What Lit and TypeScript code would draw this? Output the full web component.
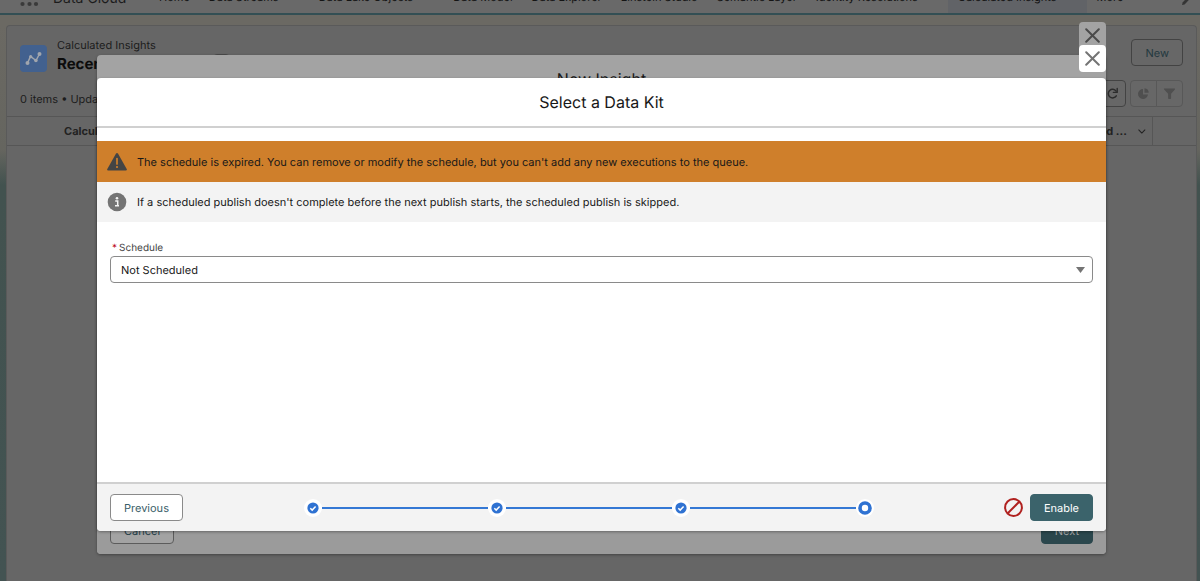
import { LitElement, html, css, svg, nothing } from "lit";
import { customElement, state } from "lit/decorators.js";
import { classMap } from "lit/directives/class-map.js";

interface NavItem {
  label: string;
  menu?: boolean;
  active?: boolean;
}

const NAV: NavItem[] = [
  { label: "Home" },
  { label: "Data Streams", menu: true },
  { label: "Data Lake Objects", menu: true },
  { label: "Data Model" },
  { label: "Data Explorer" },
  { label: "Einstein Studio" },
  { label: "Semantic Layer" },
  { label: "Identity Resolutions", menu: true },
  { label: "Calculated Insights", menu: true, active: true },
  { label: "More", menu: true },
];

const STEPS = ["Source", "Objects", "Details", "Schedule"];

const chevron = html`<svg class="chevron" viewBox="0 0 10 6" aria-hidden="true">
  <path d="M1 1l4 4 4-4" fill="none" stroke="currentColor" stroke-width="1.4" stroke-linecap="round" stroke-linejoin="round" />
</svg>`;

const cross = html`<svg class="cross" viewBox="0 0 15 15" aria-hidden="true">
  <path d="M1.2 1.2l12.6 12.6M13.8 1.2L1.2 13.8" fill="none" stroke="currentColor" stroke-width="2" stroke-linecap="round" />
</svg>`;

@customElement("app-root")
export class AppRoot extends LitElement {
  @state() private schedule = "none";

  static styles = css`
    :host {
      display: block;
      font-family: Inter, "Liberation Sans", sans-serif;
      font-size: 11px;
      line-height: 16px;
      color: #181818;
      text-rendering: geometricPrecision;
    }
    * {
      box-sizing: border-box;
    }
    button,
    select {
      font: inherit;
      margin: 0;
      text-rendering: inherit;
    }
    button {
      display: inline-flex;
      align-items: center;
      justify-content: center;
      height: 27px;
      border: 1px solid #8a8a8a;
      border-radius: 4px;
      background: #fff;
      color: #3a6069;
      padding: 0 13px;
    }
    .stage {
      position: relative;
      height: 100vh;
      overflow: hidden;
      display: flex;
      flex-direction: column;
      background: linear-gradient(#6b6963 25px, #65655f 150px, #42524f 185px, #435352);
    }

    /* Page under the dialogs */
    .nav {
      display: flex;
      align-items: flex-end;
      height: 15px;
      flex: none;
      padding: 0 10px 0 20px;
      background: #696969;
      border-bottom: 2px solid #334f54;
    }
    .launcher {
      width: 19px;
      height: 9px;
      flex: none;
      fill: #3a3a3a;
      margin-bottom: 6px;
    }
    .app-name {
      font-size: 14px;
      line-height: 16px;
      width: 96px;
      margin-left: 14px;
      margin-bottom: 6px;
      white-space: nowrap;
      color: #1c1c1c;
    }
    .nav-item {
      display: flex;
      align-items: center;
      gap: 14px;
      height: 26px;
      padding: 0 9px 7px 10px;
      color: #141414;
      text-decoration: none;
      white-space: nowrap;
    }
    .nav-item.active {
      background: #616367;
    }
    .nav-item .chevron {
      width: 7px;
      height: 5px;
    }
    .pencil {
      width: 9px;
      height: 10px;
      margin-left: auto;
      margin-bottom: 7px;
    }
    .card {
      flex: 1;
      display: flex;
      flex-direction: column;
      margin: 10px 3px 0 6px;
      background: #666;
      border: 1px solid #5a5a5a;
      border-bottom: 0;
      border-radius: 4px 4px 0 0;
    }
    .card-head {
      display: flex;
      gap: 10px;
      padding: 11px 13px 0;
    }
    .tile {
      width: 27px;
      height: 27px;
      margin-top: 8px;
      border-radius: 4px;
      background: #42618f;
    }
    .titles {
      flex: 1;
      color: #1c1c1c;
    }
    .kicker {
      margin: 0;
    }
    .title-row {
      display: flex;
      align-items: center;
      gap: 16px;
      height: 22px;
    }
    .title-row h1 {
      margin: 0;
      font-size: 15px;
      line-height: 20px;
      width: 140px;
      white-space: nowrap;
      color: #0c0c0c;
    }
    .pin {
      width: 17px;
      height: 20px;
      padding: 0;
      background: #666;
      border-color: #4a4a4a;
    }
    .dim {
      background: #676767;
      border-color: #434343;
      color: #24393f;
    }
    .card-head .dim {
      margin-top: 2px;
    }
    .toolbar {
      display: flex;
      align-items: flex-end;
      justify-content: space-between;
      padding: 5px 13px 9px;
      color: #1c1c1c;
    }
    .tools {
      display: flex;
      gap: 4px;
    }
    .tools button {
      width: 27px;
      padding: 0;
    }
    .tools svg {
      width: 13px;
      height: 13px;
    }
    .pair {
      display: flex;
    }
    .pair button {
      color: #4f4f4f;
      border-color: #585858;
    }
    .pair button:first-child {
      border-radius: 4px 0 0 4px;
    }
    .pair button:last-child {
      border-radius: 0 4px 4px 0;
      margin-left: -1px;
    }
    table {
      width: 100%;
      border-collapse: collapse;
      table-layout: fixed;
    }
    th {
      height: 29px;
      padding: 0;
      border-top: 1px solid #565656;
      border-bottom: 1px solid #565656;
      text-align: left;
      color: #222;
      white-space: nowrap;
    }
    .col-index {
      width: 57px;
    }
    .col-end {
      width: 44px;
      border-left: 1px solid #565656;
    }
    .col-date {
      width: 112px;
    }
    .th-inner {
      display: flex;
      align-items: center;
      justify-content: flex-end;
      gap: 11px;
      padding-right: 6px;
    }
    .th-inner .chevron {
      width: 11px;
      height: 7px;
    }

    /* Dialogs */
    .layer {
      position: absolute;
      inset: 0;
      display: flex;
      flex-direction: column;
      align-items: stretch;
      gap: 6px;
      padding: 22px 94px 27px 97px;
    }
    .layer.front {
      padding-top: 45px;
      padding-bottom: 50px;
    }
    .close {
      align-self: flex-end;
      flex: none;
      width: 27px;
      padding: 0;
      border: 0;
      color: #747474;
    }
    .cross {
      width: 15px;
      height: 15px;
    }
    .dialog {
      flex: 1;
      display: flex;
      flex-direction: column;
      overflow: hidden;
      background: #fff;
      border-radius: 4px;
      box-shadow: 0 1px 3px rgba(0, 0, 0, 0.35);
    }
    .back .dialog {
      background: #a3a3a3;
    }
    .back .close {
      background: #a3a3a3;
      color: #4a4a4a;
    }
    .dialog-head {
      padding: 12px 16px;
      border-bottom: 2px solid #d0d0d0;
      text-align: center;
    }
    .dialog-head h2 {
      margin: 0;
      font-size: 16px;
      line-height: 24px;
      font-weight: 400;
    }
    .dialog-body {
      flex: 1;
      padding-top: 13px;
    }
    .banner {
      display: flex;
      align-items: center;
      gap: 10px;
      padding: 0 10px;
      min-height: 40px;
      background: #f3f3f3;
    }
    .banner.warning {
      background: #cf7f2b;
      min-height: 41px;
    }
    .banner svg {
      width: 20px;
      height: 20px;
      flex: none;
    }
    .field {
      display: flex;
      flex-direction: column;
      padding: 18px 13px 0;
    }
    .field label {
      padding-left: 2px;
      font-size: 10px;
      color: #444;
    }
    .required {
      color: #ba0517;
      margin-right: 2px;
    }
    .select-wrap {
      display: grid;
      align-items: center;
    }
    .select-wrap > * {
      grid-area: 1 / 1;
    }
    select {
      appearance: none;
      width: 100%;
      height: 27px;
      padding: 0 30px 0 10px;
      border: 1px solid #8a8a8a;
      border-radius: 4px;
      background: #fff;
      color: #181818;
    }
    .arrow {
      justify-self: end;
      width: 9px;
      height: 6px;
      margin-right: 8px;
      fill: #747474;
      pointer-events: none;
    }
    .dialog-foot {
      display: flex;
      align-items: center;
      justify-content: space-between;
      height: 49px;
      padding: 0 13px;
      border-top: 2px solid #d0d0d0;
      background: #f3f3f3;
    }
    .back .dialog-foot {
      background: #9b9b9b;
      border-color: #888;
    }
    .back button {
      border-color: #5c5c5c;
    }
    .back .dialog-foot button {
      background: #a3a3a3;
      color: #25414a;
    }
    .back .dialog-foot .brand {
      background: #2b474d;
      border-color: #2b474d;
      color: #a3a3a3;
    }
    .brand {
      background: #3b636b;
      border-color: #3b636b;
      color: #fff;
    }
    .actions {
      display: flex;
      align-items: center;
      gap: 7px;
    }
    .blocked {
      width: 19px;
      height: 19px;
    }
    .progress {
      flex: 1;
      display: flex;
      align-items: center;
      max-width: 570px;
      margin: 0 8px 0 0;
      padding: 0;
      list-style: none;
    }
    .step {
      display: flex;
      align-items: center;
    }
    .step:not(:first-child) {
      flex: 1;
    }
    .step:not(:first-child)::before {
      content: "";
      flex: 1;
      height: 2px;
      background: #3478d4;
    }
    .step svg {
      width: 18px;
      height: 18px;
      flex: none;
    }
  `;

  private onSchedule(e: Event) {
    this.schedule = (e.target as HTMLSelectElement).value;
  }

  private renderNav() {
    return html`<nav class="nav">
      <svg class="launcher" viewBox="0 0 19 9" aria-hidden="true">
        ${[2.5, 9.5, 16].map((x) => svg`<circle cx=${x} cy="6" r="2.1" />`)}
      </svg>
      <span class="app-name">Data Cloud</span>
      ${NAV.map(
        (n) => html`<a class=${classMap({ "nav-item": true, active: !!n.active })} href="#"
          >${n.label}${n.menu ? chevron : nothing}</a
        >`
      )}
      <svg class="pencil" viewBox="0 0 9 10" aria-hidden="true">
        <path d="M1 9l.6-2.6L6.8 1l2 2-5.200 5.400z" fill="#353535" />
      </svg>
    </nav>`;
  }

  private renderPage() {
    return html`<main class="card">
      <div class="card-head">
        <svg class="tile" viewBox="0 0 27 27" aria-hidden="true">
          <path d="M7.500 18l3-6.500 5.500 4L19.500 9" fill="none" stroke="#a0a5ad" stroke-width="1.5" />
          <g fill="#a0a5ad">
            <circle cx="7.500" cy="18" r="2" />
            <circle cx="10.700" cy="11.700" r="1.600" />
            <circle cx="15.900" cy="15.500" r="1.800" />
            <circle cx="19.500" cy="9" r="2" />
          </g>
        </svg>
        <div class="titles">
          <p class="kicker">Calculated Insights</p>
          <div class="title-row">
            <h1>Recently Viewed</h1>
            <button class="pin" aria-label="Pin this list view"></button>
          </div>
        </div>
        <button class="dim">New</button>
      </div>
      <div class="toolbar">
        <span>0 items • Updated a few seconds ago</span>
        <div class="tools">
          <button class="dim" aria-label="Refresh">
            <svg viewBox="0 0 13 13" aria-hidden="true">
              <path d="M10.300 8.800a4.300 4.300 0 1 1-.2-4.700" fill="none" stroke="#2c2c2c" stroke-width="1.500" stroke-linecap="round" />
              <path d="M11.200 1.500v3.900H7.400" fill="none" stroke="#2c2c2c" stroke-width="1.400" stroke-linecap="round" stroke-linejoin="round" />
            </svg>
          </button>
          <div class="pair">
            <button class="dim" aria-label="Charts">
              <svg viewBox="0 0 13 13" aria-hidden="true">
                <path d="M6 2a5 5 0 1 0 5 5.500H6z" fill="currentColor" />
                <path d="M7.500 1.200a4.700 4.700 0 0 1 4.200 4.600H7.500z" fill="currentColor" />
              </svg>
            </button>
            <button class="dim" aria-label="Filters">
              <svg viewBox="0 0 13 13" aria-hidden="true">
                <path d="M1.300 1.500h10.400q.6.300.2.900L8.100 6.800v4.600q-1.600 1.200-3 0V6.800L1.100 2.400q-.4-.6.2-.9z" fill="currentColor" />
              </svg>
            </button>
          </div>
        </div>
      </div>
      <table>
        <thead>
          <tr>
            <th class="col-index"></th>
            <th>Calculated Insight Name</th>
            <th class="col-date"><div class="th-inner">Last Modified ... ${chevron}</div></th>
            <th class="col-end"></th>
          </tr>
        </thead>
      </table>
    </main>`;
  }

  private renderStep(label: string, i: number) {
    const current = i === STEPS.length - 1;
    return html`<li class="step">
      <svg viewBox="0 0 18 18" role="img" aria-label=${label}>
        <circle cx="9" cy="9" r="9" fill="#fff" />
        ${current
          ? svg`<circle cx="9" cy="9" r="5" fill="#fff" stroke="#2f72d2" stroke-width="3.600" />`
          : svg`<circle cx="9" cy="9" r="5.600" fill="#2f72d2" />
              <path d="M6.300 9.200l1.900 1.900 3.400-3.700" fill="none" stroke="#fff" stroke-width="1.500" />`}
      </svg>
    </li>`;
  }

  render() {
    return html`<div class="stage">
      ${this.renderNav()} ${this.renderPage()}

      <div class="layer back">
        <button class="close" aria-label="Close New Insight">${cross}</button>
        <section class="dialog">
          <header class="dialog-head"><h2>New Insight</h2></header>
          <div class="dialog-body"></div>
          <footer class="dialog-foot">
            <button>Cancel</button>
            <button class="brand">Next</button>
          </footer>
        </section>
      </div>

      <div class="layer front">
        <button class="close" aria-label="Close">${cross}</button>
        <section class="dialog" role="dialog" aria-labelledby="title">
          <header class="dialog-head"><h2 id="title">Select a Data Kit</h2></header>
          <div class="dialog-body">
            <div class="banner warning" role="alert">
              <svg viewBox="0 0 20 20" aria-hidden="true">
                <path d="M8.900 1.800q1.100-1.600 2.200 0l8.600 15.200q.6 1.400-.9 1.600H1.200q-1.500-.2-.9-1.600z" fill="#444" />
                <path d="M10 6.500v5.500" stroke="#cf7f2b" stroke-width="1.700" stroke-linecap="round" />
                <circle cx="10" cy="15" r="1.100" fill="#cf7f2b" />
              </svg>
              <span>The schedule is expired. You can remove or modify the schedule, but you can't add any new executions to the queue.</span>
            </div>
            <div class="banner">
              <svg viewBox="0 0 20 20" aria-hidden="true">
                <circle cx="10" cy="10" r="9.300" fill="#747474" />
                <circle cx="10" cy="6.200" r="1.300" fill="#f3f3f3" />
                <path d="M8.200 9h2.500v4.500M8 13.700h4" fill="none" stroke="#f3f3f3" stroke-width="1.500" />
              </svg>
              <span>If a scheduled publish doesn't complete before the next publish starts, the scheduled publish is skipped.</span>
            </div>
            <div class="field">
              <label for="schedule"><span class="required">*</span>Schedule</label>
              <div class="select-wrap">
                <select id="schedule" required .value=${this.schedule} @change=${this.onSchedule}>
                  <option value="none">Not Scheduled</option>
                </select>
                <svg class="arrow" viewBox="0 0 9 6" aria-hidden="true"><path d="M0 0h9L4.500 6z" /></svg>
              </div>
            </div>
          </div>
          <footer class="dialog-foot">
            <button>Previous</button>
            <ol class="progress">
              ${STEPS.map((s, i) => this.renderStep(s, i))}
            </ol>
            <div class="actions">
              <svg class="blocked" viewBox="0 0 19 19" role="img" aria-label="Not available">
                <circle cx="9.500" cy="9.500" r="8.400" fill="none" stroke="#b0211f" stroke-width="2" />
                <path d="M3.800 15.200L15.200 3.800" stroke="#b0211f" stroke-width="2" />
              </svg>
              <button class="brand">Enable</button>
            </div>
          </footer>
        </section>
      </div>
    </div>`;
  }
}
